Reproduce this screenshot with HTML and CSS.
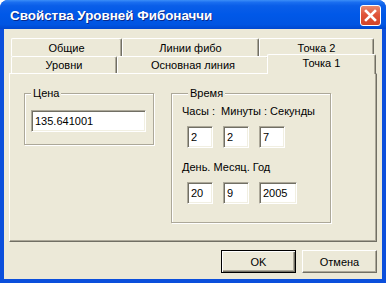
FILE: index.html
```html
<!DOCTYPE html>
<html lang="ru">
<head>
    <meta charset="UTF-8">
    <title>Свойства Уровней Фибоначчи</title>
    <link rel="stylesheet" href="styles.css">
</head>
<body>
    <div class="window">
        <!-- Title bar -->
        <div class="titlebar">
            <span class="title">Свойства Уровней Фибоначчи</span>
            <button class="close" aria-label="Закрыть">
                <svg width="21" height="21" viewBox="0 0 21 21">
                    <path d="M6 6 L15 15 M15 6 L6 15" stroke="#fff" stroke-width="2.6" stroke-linecap="square"/>
                </svg>
            </button>
        </div>

        <!-- Client area -->
        <div class="client">
            <div class="tabs">
                <div class="tab-row back">
                    <div class="tab tab-general">Общие</div>
                    <div class="tab tab-lines">Линии фибо</div>
                    <div class="tab tab-point2">Точка 2</div>
                </div>
                <div class="tab-row front">
                    <div class="tab tab-levels">Уровни</div>
                    <div class="tab tab-main">Основная линия</div>
                    <div class="tab tab-point1 active">Точка 1</div>
                </div>
            </div>

            <div class="panel">
                <div class="group price">
                    <span class="legend">Цена</span>
                    <input class="field wide" type="text" value="135.641001">
                </div>

                <div class="group time">
                    <span class="legend">Время</span>
                    <div class="caption">Часы :  Минуты : Секунды</div>
                    <div class="fields">
                        <input class="field" type="text" value="2">
                        <input class="field" type="text" value="2">
                        <input class="field" type="text" value="7">
                    </div>
                    <div class="caption second">День. Месяц. Год</div>
                    <div class="fields">
                        <input class="field" type="text" value="20">
                        <input class="field" type="text" value="9">
                        <input class="field year" type="text" value="2005">
                    </div>
                </div>
            </div>

            <div class="buttons">
                <button class="btn default">OK</button>
                <button class="btn">Отмена</button>
            </div>
        </div>
    </div>
</body>
</html>
```

FILE: styles.css
```css
/* General */
html, body {
    margin: 0;
    padding: 0;
    background: #fff;
}

body {
    font-family: "Liberation Sans", Arial, sans-serif;
    font-size: 11px;
    color: #000;
}

/* Window frame */
.window {
    width: 386px;
    height: 283px;
    box-sizing: border-box;
    padding: 0 4px 4px;
    background: #0b4fdc;
    border-radius: 8px 8px 0 0;
    display: flex;
    flex-direction: column;
}

.titlebar {
    height: 29px;
    margin: 0 -4px;
    padding: 1px 5px 0 10px;
    box-sizing: border-box;
    display: flex;
    align-items: center;
    justify-content: space-between;
    border-radius: 8px 8px 0 0;
    background: linear-gradient(to bottom, #3c8ef7 0%, #1a6ef0 8%, #0a5ee8 20%, #0058e8 50%, #0055e2 85%, #0047cf 100%);
}

.title {
    color: #fff;
    font-weight: bold;
    font-size: 13.4px;
    text-shadow: 1px 1px 0 #0a2a8c;
}

.close {
    width: 21px;
    height: 21px;
    padding: 0;
    border: 1px solid #fff;
    border-radius: 3px;
    background: linear-gradient(to bottom, #e98a6f 0%, #e0553b 45%, #d24428 100%);
    display: flex;
    align-items: center;
    justify-content: center;
}

.close svg {
    display: block;
    margin: -1px;
}

.client {
    flex: 1;
    background: #ece9d8;
    padding-top: 9px;
}

/* Tabs */
.tabs {
    margin-left: 7px;
    width: 363px;
}

.tab-row {
    display: flex;
}

.back .tab {
    height: 18px;
}

.front .tab {
    height: 17px;
}

.tab {
    box-sizing: border-box;
    border-top: 1px solid #fff;
    border-left: 1px solid #fff;
    border-right: 1px solid #716f64;
    box-shadow: inset -1px 0 0 #aca899;
    border-radius: 2px 2px 0 0;
    background: #ece9d8;
    display: flex;
    align-items: center;
    justify-content: center;
}

.tab-general { width: 111px; }
.tab-lines { width: 137px; }
.tab-point2 { width: 115px; }
.tab-levels { width: 106px; }
.tab-main { width: 152px; }
.tab-point1 { width: 109px; }

.tab.active {
    height: 20px;
    margin: -2px -2px -1px;
    position: relative;
    z-index: 1;
    padding-bottom: 3px;
}

/* Panel */
.panel {
    margin-left: 5px;
    width: 368px;
    height: 169px;
    box-sizing: border-box;
    border: 1px solid;
    border-color: #fff #716f64 #716f64 #fff;
    box-shadow: inset -1px -1px 0 #aca899;
    padding: 19px 0 0 14px;
    display: flex;
    align-items: flex-start;
    gap: 17px;
}

.group {
    box-sizing: border-box;
    border: 1px solid #aca899;
    box-shadow: inset 1px 1px 0 #fff, 1px 1px 0 #fff;
}

.legend {
    display: block;
    width: max-content;
    margin: -7px 0 0 6px;
    padding: 0 2px;
    line-height: 13px;
    background: #ece9d8;
}

.price {
    width: 130px;
    height: 52px;
}

.price .field {
    margin: 10px 0 0 6px;
}

.time {
    width: 160px;
    height: 130px;
    padding-left: 10px;
}

.caption {
    margin-top: 5px;
    line-height: 13px;
    white-space: pre;
}

.caption.second {
    margin-top: 13px;
}

.fields {
    display: flex;
    gap: 10px;
    margin: 8px 0 0 5px;
}

/* Edit boxes */
.field {
    box-sizing: border-box;
    width: 26px;
    height: 22px;
    margin: 0;
    padding: 0 3px;
    font-family: inherit;
    font-size: 11px;
    color: #000;
    background: #fff;
    border: 1px solid;
    border-color: #aca899 #fff #fff #aca899;
    box-shadow: inset 1px 1px 0 #716f64, inset -1px -1px 0 #f1efe2;
    outline: none;
}

.field.wide {
    width: 115px;
}

.field.year {
    width: 38px;
}

/* Buttons */
.buttons {
    display: flex;
    justify-content: flex-end;
    gap: 6px;
    margin-top: 8px;
    padding-right: 5px;
}

.btn {
    box-sizing: border-box;
    width: 75px;
    height: 23px;
    padding: 0;
    font-family: inherit;
    font-size: 11px;
    color: #000;
    background: #ece9d8;
    border: 1px solid;
    border-color: #fff #716f64 #716f64 #fff;
    box-shadow: inset -1px -1px 0 #aca899;
}

.btn.default {
    border-color: #000;
    box-shadow: inset 1px 1px 0 #fff, inset -1px -1px 0 #716f64, inset -2px -2px 0 #aca899;
}
```
